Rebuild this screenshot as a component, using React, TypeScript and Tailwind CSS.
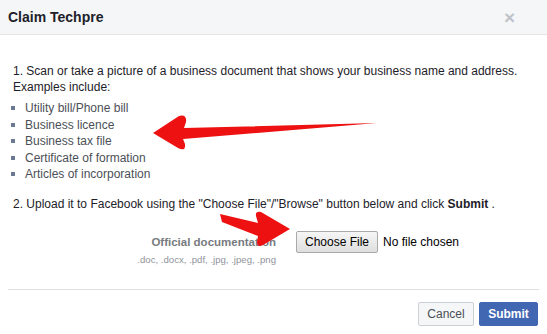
import React from 'react';

const items = [
  'Utility bill/Phone bill',
  'Business licence',
  'Business tax file',
  'Certificate of formation',
  'Articles of incorporation',
];

const Arrows = () => (
  <svg
    className="absolute left-0 top-0 pointer-events-none"
    width="547"
    height="334"
    viewBox="0 0 547 334"
  >
    <path
      d="M377 123 L184 128 L186 122 Q187 114 179 116 L153 133 L178 148 Q186 152 185 144 L183 139 Z"
      fill="#ee1111"
    />
    <path
      d="M220 214 L258 223 L256 216 Q255 211 261 212 L290 229 L263 245 Q257 248 257 242 L258 236 L222 222 Z"
      fill="#ee1111"
    />
  </svg>
);

export default function App() {
  return (
    <div className="relative w-[547px] h-[334px] bg-white overflow-hidden font-['Liberation_Sans',Arial,sans-serif]">
      {/* header */}
      <div className="h-[35px] bg-[#f5f6f7] border-b border-[#e5e5e5] flex items-center justify-between pl-2 pr-[32px]">
        <span className="text-[14px] font-bold text-[#1d2129]">Claim Techpre</span>
        <span className="text-[19px] font-bold leading-none text-[#bec2c9]">×</span>
      </div>

      {/* body */}
      <div className="px-[13px] pt-[29px] text-[12px] text-[#1d2129]">
        <p className="leading-[15.5px]">
          1. Scan or take a picture of a business document that shows your business name and address.
          <br />
          Examples include:
        </p>
        <ul className="mt-[5px]">
          {items.map((t) => (
            <li key={t} className="flex items-center leading-[16.5px] text-[#4b4f56] -ml-[2px]">
              <span className="w-[4px] h-[4px] bg-[#6b7a93] mr-[10px]" />
              {t}
            </li>
          ))}
        </ul>
        <p className="mt-[13px] leading-[16px]">
          2. Upload it to Facebook using the "Choose File"/"Browse" button below and click <b>Submit</b> .
        </p>

        <div className="mt-[19px] flex items-start">
          <div className="w-[263px] text-right pt-[3px]">
            <div className="text-[11.5px] font-bold text-[#777b80] leading-[16px]">Official documentation</div>
            <div className="text-[9.6px] text-[#90949c] mt-[4px] leading-[12px]">
              .doc, .docx, .pdf, .jpg, .jpeg, .png
            </div>
          </div>
          <div className="ml-[20px] flex items-center">
            <button className="h-[22px] w-[82px] border border-[#a9a9a9] rounded-[2px] bg-gradient-to-b from-[#f6f6f6] to-[#dedede] text-[12px] text-black">
              Choose File
            </button>
            <span className="ml-[5px] text-black">No file chosen</span>
          </div>
        </div>
      </div>

      {/* footer */}
      <div className="absolute left-[8px] right-[8px] top-[289px] border-t border-[#dddfe2]" />
      <div className="absolute right-[9px] top-[302px] flex gap-[5px]">
        <button className="h-[24px] w-[56px] border border-[#ccd0d5] rounded-[2px] bg-[#f5f6f7] text-[12px] text-[#4b4f56]">
          Cancel
        </button>
        <button className="h-[24px] w-[59px] border border-[#4267b2] rounded-[2px] bg-[#4267b2] text-[12px] font-bold text-white">
          Submit
        </button>
      </div>

      <Arrows />
    </div>
  );
}
